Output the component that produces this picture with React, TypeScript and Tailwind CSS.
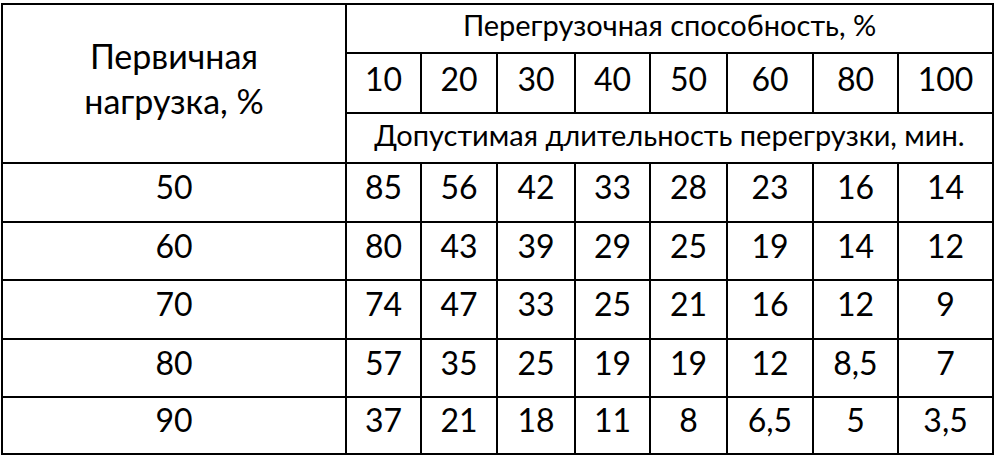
import React from "react";

const heads = ["10", "20", "30", "40", "50", "60", "80", "100"];
const rows: [string, string[]][] = [
  ["50", ["85", "56", "42", "33", "28", "23", "16", "14"]],
  ["60", ["80", "43", "39", "29", "25", "19", "14", "12"]],
  ["70", ["74", "47", "33", "25", "21", "16", "12", "9"]],
  ["80", ["57", "35", "25", "19", "19", "12", "8,5", "7"]],
  ["90", ["37", "21", "18", "11", "8", "6,5", "5", "3,5"]],
];
const colW = [344, 75, 76, 78, 75, 77, 86, 85, 95];

export default function App() {
  return (
    <div className="w-[998px] h-[463px] bg-white pl-px pt-[3px] text-black font-['Lato','Carlito',sans-serif]">
      <table className="border-collapse table-fixed w-[993px] border-2 border-black">
        <colgroup>
          {colW.map((w, i) => (
            <col key={i} style={{ width: w }} />
          ))}
        </colgroup>
        <tbody>
          <tr className="h-[49px]">
            <td rowSpan={3} className="border-2 border-black text-center align-middle text-[34px] leading-[45px] pb-[12px]">
              Первичная
              <br />
              нагрузка, %
            </td>
            <td colSpan={8} className="border-2 border-black text-center align-middle text-[29px] leading-none pb-[9px]">
              Перегрузочная способность, %
            </td>
          </tr>
          <tr className="h-[60px]">
            {heads.map((h) => (
              <td key={h} className="border-2 border-black text-center align-middle text-[32px] leading-none pb-[9px]">
                {h}
              </td>
            ))}
          </tr>
          <tr className="h-[50px]">
            <td colSpan={8} className="border-2 border-black text-center align-middle text-[29px] leading-none pb-[8px]">
              Допустимая длительность перегрузки, мин.
            </td>
          </tr>
          {rows.map(([k, vals], ri) => (
            <tr key={k} className={ri === 1 || ri === 3 ? "h-[58px]" : ri === 4 ? "h-[57px]" : "h-[59px]"}>
              <td className="border-2 border-black text-center align-middle text-[32px] leading-none pb-[11px]">{k}</td>
              {vals.map((v, i) => (
                <td key={i} className="border-2 border-black text-center align-middle text-[32px] leading-none pb-[11px]">
                  {v}
                </td>
              ))}
            </tr>
          ))}
        </tbody>
      </table>
    </div>
  );
}
